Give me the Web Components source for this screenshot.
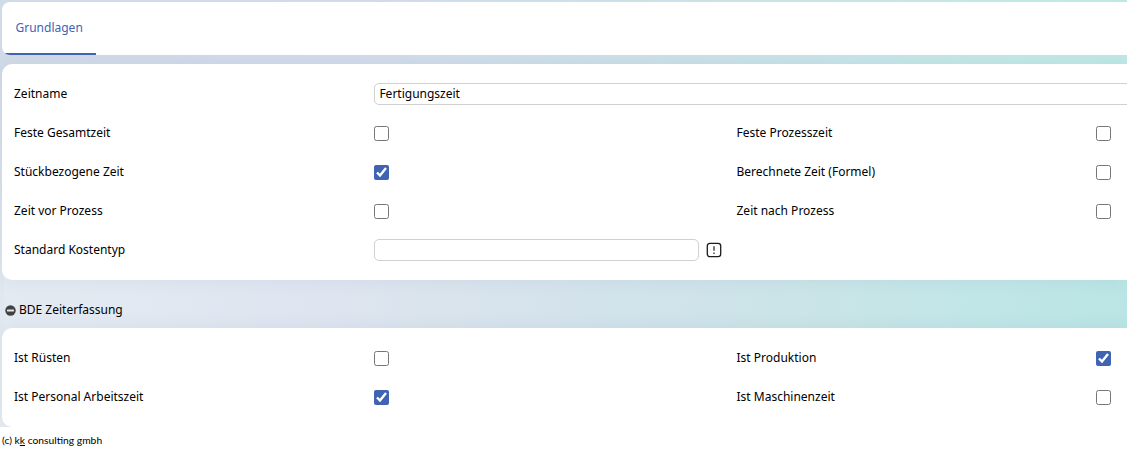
<!DOCTYPE html>
<html lang="de">
<head>
<meta charset="utf-8">
<title>Grundlagen</title>
<style>
    html, body {
        margin: 0;
        height: 100%;
        overflow: hidden;
        background: #ffffff;
    }
    body {
        font-family: "Noto Sans", "Open Sans", sans-serif;
        font-size: 12px;
        color: #000000;
    }
</style>
</head>
<body>

<template id="template-page">
    <main><slot></slot></main>
    <footer><slot name="footer"></slot></footer>
    <style>
        :host {
            display: block;
            --color-accent: #4063b4;
        }
        main {
            display: flex;
            flex-direction: column;
            height: 427px;
            padding: 2px 0 0 2px;
            box-sizing: border-box;
            overflow: hidden;
            background:
                linear-gradient(92deg, #d1dbe7 0%, #d2daea 15%, #d3dbeb 33%, #cfdeea 42%, #cbe1e8 62%, #c6e6e8 80%, #c1e9e6 94%, #bee8e5 100%) 0 0 / 100% 75px no-repeat,
                linear-gradient(to bottom, #d2dae8 75px, #e1e7f0 290px, #e5ebef 427px) 0 0 / 4px 100% no-repeat,
                linear-gradient(97deg, #e3eaf1 0%, #e2e9f2 12%, #dfe5f0 29%, #dae4ed 40%, #d2e3eb 55%, #cbe4e8 70%, #c2e6e7 85%, #b9e5e4 100%);
        }
        footer {
            padding: 7px 2px 0;
            font: 10.3px/13px Lato, "Noto Sans", sans-serif;
        }
    </style>
</template>

<template id="template-tabs">
    <slot></slot>
    <style>
        :host {
            display: flex;
            flex: none;
            height: 53px;
            border-radius: 8px 0 0 8px;
            overflow: hidden;
            background: #ffffff;
        }
        ::slotted(a) {
            box-sizing: border-box;
            padding: 0 13px 0 13.5px;
            line-height: 52px;
            color: var(--color-accent);
            border-bottom: 2px solid var(--color-accent);
        }
    </style>
</template>

<template id="template-card">
    <slot></slot>
    <style>
        :host {
            display: grid;
            flex: none;
            grid-template-columns: 360px 1fr;
            grid-auto-rows: 39px;
            align-content: start;
            box-sizing: border-box;
            height: var(--card-height);
            margin-top: 9px;
            padding: 10px 0 0 12px;
            border-radius: 10px 0 0 10px;
            background: #ffffff;
            box-shadow: 0 0 18px rgba(60, 90, 110, var(--shadow-alpha, .07));
        }
    </style>
</template>

<template id="template-row">
    <slot></slot>
    <style>
        :host {
            display: grid;
            grid-column: 1 / -1;
            grid-template-columns: 722.5px 1fr;
        }
    </style>
</template>

<template id="template-field">
    <label for="input"></label>
    <div class="control"></div>
    <style>
        :host {
            display: grid;
            grid-template-columns: 360px 1fr;
            align-items: center;
        }
        :host([wide]) {
            grid-column: 1 / -1;
        }
        .control {
            display: flex;
            align-items: center;
        }
        input[type="checkbox"] {
            width: 15px;
            height: 15px;
            margin: 1px 0 0;
            accent-color: var(--color-accent);
        }
        :host([second]) input {
            margin-left: -.5px;
        }
        input[type="text"] {
            box-sizing: border-box;
            width: 325px;
            height: 22px;
            padding: 0 4.4px;
            border: 1px solid #d0d0d0;
            border-radius: 5px;
            background: #ffffff;
            color: inherit;
            font: inherit;
        }
        :host([wide]) input[type="text"] {
            width: 770px;
        }
        svg {
            width: 16px;
            height: 16px;
            margin-left: 7px;
        }
    </style>
</template>

<template id="template-section-heading">
    <svg viewBox="0 0 11 11">
        <circle cx="5.5" cy="5.5" r="5.2" fill="#424242"/>
        <rect x="2" y="4.6" width="7" height="1.8" rx=".4" fill="#e4e4e4"/>
    </svg>
    <span><slot></slot></span>
    <style>
        :host {
            display: flex;
            flex: none;
            align-items: center;
            height: 17px;
            margin: 21px 0 1px 3px;
        }
        svg {
            width: 11px;
            height: 11px;
            margin: 2px 3px 0 0;
        }
    </style>
</template>

<kk-page>
    <kk-tabs><a>Grundlagen</a></kk-tabs>

    <kk-card style="--card-height: 216px">
        <kk-field wide type="text" label="Zeitname" value="Fertigungszeit"></kk-field>
        <kk-row>
            <kk-field type="checkbox" label="Feste Gesamtzeit"></kk-field>
            <kk-field second type="checkbox" label="Feste Prozesszeit"></kk-field>
        </kk-row>
        <kk-row>
            <kk-field type="checkbox" label="Stückbezogene Zeit" checked></kk-field>
            <kk-field second type="checkbox" label="Berechnete Zeit (Formel)"></kk-field>
        </kk-row>
        <kk-row>
            <kk-field type="checkbox" label="Zeit vor Prozess"></kk-field>
            <kk-field second type="checkbox" label="Zeit nach Prozess"></kk-field>
        </kk-row>
        <kk-row>
            <kk-field type="text" label="Standard Kostentyp" lookup></kk-field>
        </kk-row>
    </kk-card>

    <kk-section-heading>BDE Zeiterfassung</kk-section-heading>

    <kk-card style="--card-height: 99px">
        <kk-row>
            <kk-field type="checkbox" label="Ist Rüsten"></kk-field>
            <kk-field second type="checkbox" label="Ist Produktion" checked></kk-field>
        </kk-row>
        <kk-row>
            <kk-field type="checkbox" label="Ist Personal Arbeitszeit" checked></kk-field>
            <kk-field second type="checkbox" label="Ist Maschinenzeit"></kk-field>
        </kk-row>
    </kk-card>

    <span slot="footer">(c) k<u>k</u> consulting gmbh</span>
</kk-page>

<script>
    class KkElement extends HTMLElement {
        constructor() {
            super();
            const id = this.localName.replace('kk-', 'template-');
            const template = document.getElementById(id).content;
            this.attachShadow({ mode: 'open' }).appendChild(template.cloneNode(true));
        }
    }

    customElements.define('kk-page', class extends KkElement {});
    customElements.define('kk-tabs', class extends KkElement {});
    customElements.define('kk-card', class extends KkElement {});
    customElements.define('kk-row', class extends KkElement {});
    customElements.define('kk-section-heading', class extends KkElement {});

    const lookupIcon = `
        <svg viewBox="0 0 16 16">
            <rect x="1.3" y="1.3" width="13.4" height="13.4" rx="2.6" fill="none" stroke="#1c1c1c" stroke-width="1.3"/>
            <path d="M8 4.2v4.6M8 10.4v1.6" stroke="#555555" stroke-width="1.6"/>
        </svg>`;

    customElements.define('kk-field', class extends KkElement {
        connectedCallback() {
            this.shadowRoot.querySelector('label').textContent = this.getAttribute('label');
            const input = document.createElement('input');
            input.id = 'input';
            input.type = this.getAttribute('type');
            if (input.type === 'checkbox') {
                input.checked = this.hasAttribute('checked');
            } else {
                input.value = this.getAttribute('value') || '';
            }
            const control = this.shadowRoot.querySelector('.control');
            control.replaceChildren(input);
            if (this.hasAttribute('lookup')) {
                control.insertAdjacentHTML('beforeend', lookupIcon);
            }
        }
    });
</script>
</body>
</html>
